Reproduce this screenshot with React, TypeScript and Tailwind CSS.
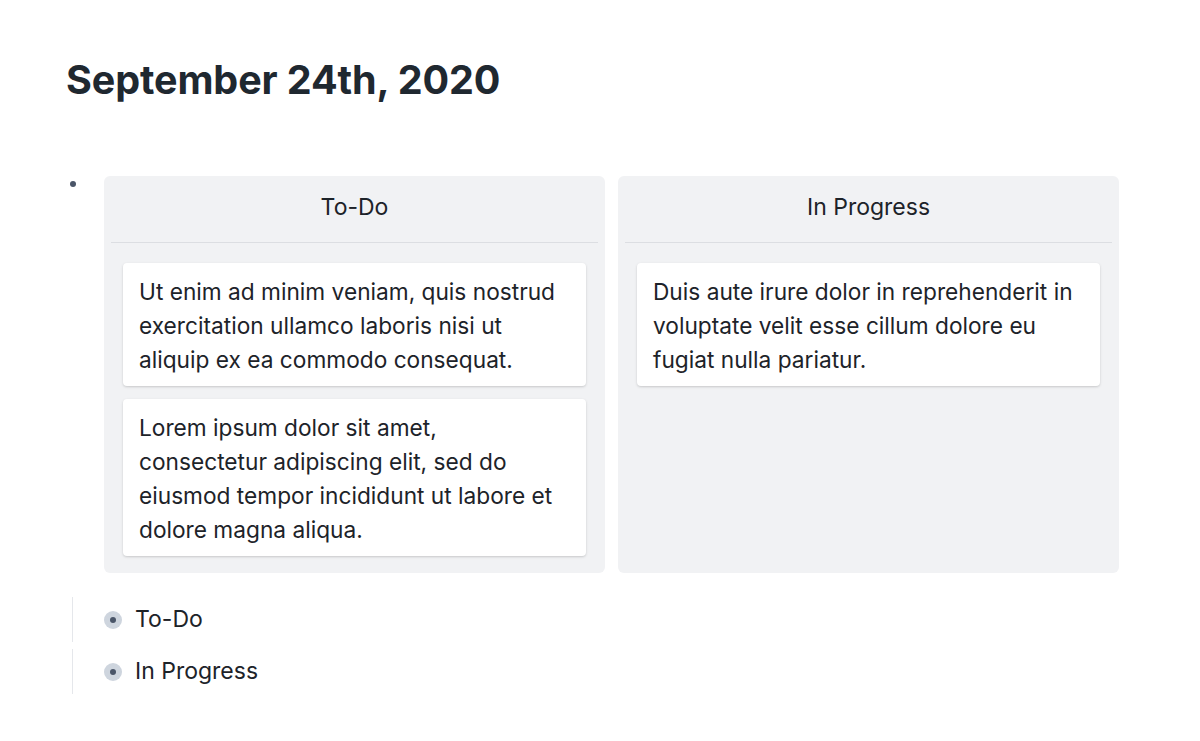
import React from 'react';

const columns = [
  {
    title: 'To-Do',
    cards: [
      'Ut enim ad minim veniam, quis nostrud exercitation ullamco laboris nisi ut aliquip ex ea commodo consequat.',
      'Lorem ipsum dolor sit amet, consectetur adipiscing elit, sed do eiusmod tempor incididunt ut labore et dolore magna aliqua.',
    ],
  },
  {
    title: 'In Progress',
    cards: [
      'Duis aute irure dolor in reprehenderit in voluptate velit esse cillum dolore eu fugiat nulla pariatur.',
    ],
  },
];

const App: React.FC = () => {
  return (
    <div
      className="min-h-screen bg-white px-[66px] pt-[52px] text-[#1d2329]"
      style={{ fontFamily: 'Inter, "Noto Sans", sans-serif' }}
    >
      <h1 className="text-[39.5px] font-bold leading-[56px] tracking-[-0.1px] text-[#1f2830]">
        September 24th, 2020
      </h1>

      {/* Board block */}
      <div className="mt-[68px] flex">
        <div className="w-[38px] shrink-0 pt-[5px] pl-[4px]">
          <div className="h-[6px] w-[6px] rounded-full bg-[#4a5568]" />
        </div>
        <div className="flex w-[1015px] items-start gap-[13px]">
          {columns.map((col) => (
            <div
              key={col.title}
              className="flex h-[397px] w-[501px] flex-col rounded-[6px] bg-[#f1f2f4] px-[7px]"
            >
              <div className="flex h-[67px] items-center justify-center border-b border-[#dcdee2] pb-[4px] text-[23px]">
                {col.title}
              </div>
              <div className="flex flex-col gap-[13px] px-[12px] pt-[20px]">
                {col.cards.map((c) => (
                  <div
                    key={c}
                    className="rounded-[4px] bg-white px-[16px] pt-[12px] pb-[9px] text-[22.7px] leading-[34px] shadow-[0_1px_3px_rgba(0,0,0,0.12),0_1px_2px_rgba(0,0,0,0.06)]"
                  >
                    {c}
                  </div>
                ))}
              </div>
            </div>
          ))}
        </div>
      </div>

      {/* Child list */}
      <div className="mt-[24px] flex flex-col gap-[7px]">
        {columns.map((col) => (
          <div
            key={col.title}
            className="ml-[6px] flex h-[45px] items-center border-l border-[#e5e7eb] pl-[31px]"
          >
            <div className="flex h-[18px] w-[18px] items-center justify-center rounded-full bg-[#ced5de]">
              <div className="h-[6px] w-[6px] rounded-full bg-[#4a5568]" />
            </div>
            <span className="ml-[13px] text-[23px]">{col.title}</span>
          </div>
        ))}
      </div>
    </div>
  );
};

export default App;
